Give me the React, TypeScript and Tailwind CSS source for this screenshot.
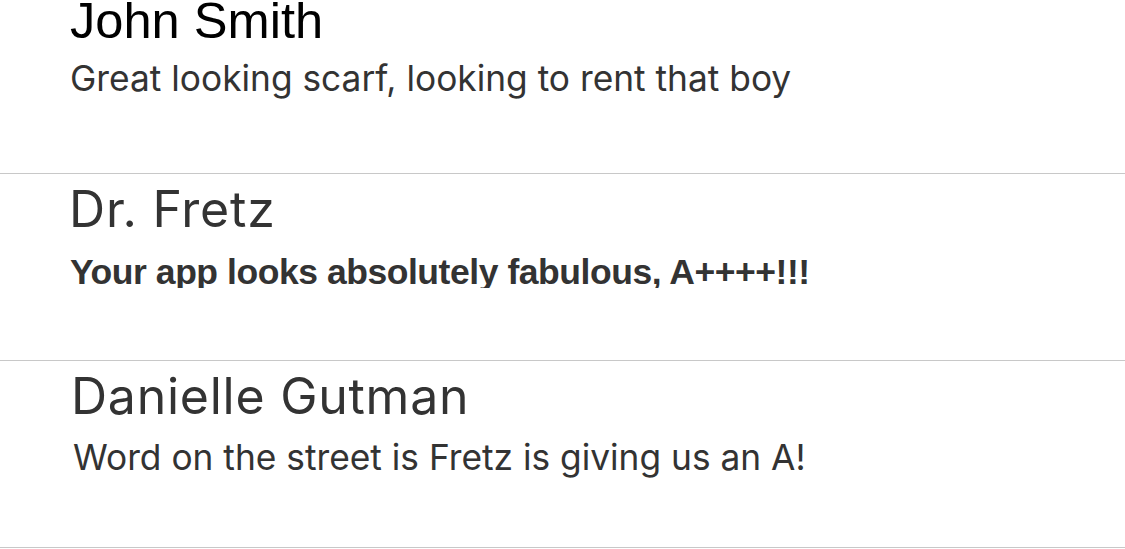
import React from 'react'

type Review = {
  name: string
  text: string
  rowClass: string
  nameClass: string
  textClass: string
}

const reviews: Review[] = [
  {
    name: 'John Smith',
    text: 'Great looking scarf, looking to rent that boy',
    rowClass: 'pt-[9px]',
    nameClass: "pl-[70px] text-[50.6px] leading-[50px] text-black font-['Liberation_Sans',Arial,sans-serif]",
    textClass: 'pl-[70px] mt-[13px] text-[35.3px]',
  },
  {
    name: 'Dr. Fretz',
    text: 'Your app looks absolutely fabulous, A++++!!!',
    rowClass: 'pt-[10px]',
    nameClass: 'pl-[69px] text-[50px] leading-[50px] tracking-[0.8px] text-[#333333]',
    textClass: "pl-[70px] mt-[18px] h-[36px] overflow-hidden text-[35.5px] font-bold font-['Liberation_Sans',Arial,sans-serif] tracking-[-0.45px]",
  },
  {
    name: 'Danielle Gutman',
    text: 'Word on the street is Fretz is giving us an A!',
    rowClass: 'pt-[10px]',
    nameClass: 'pl-[71px] text-[50px] leading-[50px] tracking-[0.75px] text-[#333333]',
    textClass: 'pl-[73px] mt-[17px] text-[35.3px]',
  },
]

const ReviewRow = ({ review }: { review: Review }) => {
  return (
    <div className={`h-[187px] border-b border-[#c8c8c8] ${review.rowClass}`}>
      <div className={review.nameClass}>{review.name}</div>
      <div className={`leading-[40px] text-[#333333] ${review.textClass}`}>
        {review.text}
      </div>
    </div>
  )
}

export default function App() {
  return (
    <div className="h-[549px] w-[1125px] overflow-hidden bg-white font-['Inter',sans-serif]">
      <div className="-mt-[13px] flex flex-col">
        {reviews.map((review) => (
          <ReviewRow key={review.name} review={review} />
        ))}
      </div>
    </div>
  )
}
